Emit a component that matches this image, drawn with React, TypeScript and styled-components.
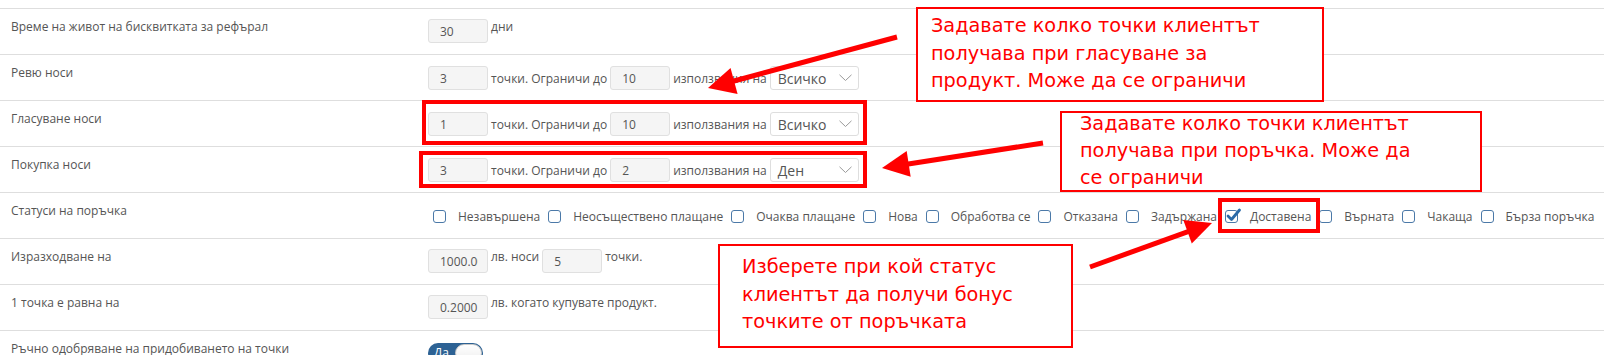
import React from "react";
import styled, { createGlobalStyle } from "styled-components";

const GlobalStyle = createGlobalStyle`
  html, body { margin: 0; padding: 0; background: #ffffff; }
  body { font-family: "Open Sans", "Liberation Sans", sans-serif; }
  * { box-sizing: border-box; }
`;

const Page = styled.div`
  position: relative;
  width: 1604px;
  height: 355px;
  overflow: hidden;
  padding-top: 8px;
  background: #fff;
`;

const Table = styled.div`
  border-top: 1px solid #dedede;
`;

const Row = styled.div`
  display: grid;
  grid-template-columns: 428px 1fr;
  height: 46px;
  border-bottom: 1px solid #dedede;
`;

const Label = styled.div`
  padding: 8px 0 0 11px;
  font-size: 12px;
  line-height: 20px;
  color: #555;
  white-space: nowrap;
`;

const Controls = styled.div<{ $top?: number }>`
  display: flex;
  align-items: center;
  align-self: start;
  gap: 3px;
  padding-top: ${(p) => p.$top ?? 10}px;
`;

const Field = styled.input`
  width: 60px;
  height: 24px;
  padding: 0 9px 0 11px;
  border: 1px solid #e0e0e0;
  border-radius: 3px;
  background: #f5f5f5;
  font-family: "Open Sans", sans-serif;
  font-size: 12px;
  color: #555;
  outline: none;
`;

const Note = styled.span<{ $raised?: boolean }>`
  font-size: 12px;
  color: #555;
  white-space: nowrap;
  line-height: ${(p) => (p.$raised ? "16px" : "24px")};
  align-self: ${(p) => (p.$raised ? "flex-start" : "center")};
  margin-top: ${(p) => (p.$raised ? "0px" : "2px")};
`;

const SelectBox = styled.div`
  width: 89px;
  height: 24px;
  border: 1px solid #dedede;
  border-radius: 3px;
  background: #fff;
  display: flex;
  align-items: center;
  justify-content: space-between;
  padding: 0 6px 0 7px;
  font-size: 14px;
  color: #555;
`;

const CheckList = styled.div`
  display: flex;
  align-items: center;
  padding: 13px 0 0 5px;
  height: 33px;
`;

const CheckItem = styled.label`
  display: flex;
  align-items: center;
  margin-right: 8px;
  font-size: 12px;
  color: #555;
  white-space: nowrap;
`;

const Box = styled.span`
  position: relative;
  width: 13px;
  height: 13px;
  border: 1.5px solid #4b79a8;
  border-radius: 3px;
  margin-right: 12px;
  background: #fff;
`;

const Tick = styled.svg`
  position: absolute;
  left: 0px;
  top: -4px;
`;

const Switch = styled.div`
  width: 55px;
  height: 20px;
  border-radius: 10px;
  background: #2d6294;
  display: flex;
  align-items: center;
  padding-left: 6px;
  font-size: 12px;
  line-height: 20px;
  color: #fff;
  gap: 6px;
`;

const Knob = styled.span`
  flex: 1;
  height: 18px;
  margin-right: 1px;
  border-radius: 9px;
  background: linear-gradient(#ffffff, #eeeeee);
  border: 1px solid #c8c8c8;
`;

const Callout = styled.div<{ $x: number; $y: number; $w: number; $h: number; $pl: number }>`
  position: absolute;
  left: ${(p) => p.$x}px;
  top: ${(p) => p.$y}px;
  width: ${(p) => p.$w}px;
  height: ${(p) => p.$h}px;
  padding-left: ${(p) => p.$pl}px;
  border: 2px solid #ff0000;
  background: #fff;
  font-family: "DejaVu Sans", Verdana, sans-serif;
  font-size: 19.3px;
  color: #ff0000;
  white-space: nowrap;
`;

const CalloutText = styled.div<{ $mt: number; $lh: number }>`
  margin-top: ${(p) => p.$mt}px;
  line-height: ${(p) => p.$lh}px;
`;

const Frame = styled.div<{ $x: number; $y: number; $w: number; $h: number }>`
  position: absolute;
  left: ${(p) => p.$x}px;
  top: ${(p) => p.$y}px;
  width: ${(p) => p.$w}px;
  height: ${(p) => p.$h}px;
  border: 4px solid #ff0000;
`;

const ArrowLayer = styled.svg`
  position: absolute;
  left: 0;
  top: 0;
  pointer-events: none;
`;

const Chevron = () => (
  <svg width="13" height="8" viewBox="0 0 13 8">
    <polyline points="0.5,0.8 6.5,6.5 12.5,0.8" fill="none" stroke="#9a9a9a" strokeWidth="1" />
  </svg>
);

const Select = ({ value }: { value: string }) => (
  <SelectBox>
    <span>{value}</span>
    <Chevron />
  </SelectBox>
);

const Check = ({ label, checked }: { label: string; checked?: boolean }) => (
  <CheckItem>
    <Box>
      {checked && (
        <Tick width="16" height="16" viewBox="0 0 16 16">
          <polyline points="2,9 5.5,12.5 13.5,3" fill="none" stroke="#2a6aa8" strokeWidth="2.8" strokeLinecap="round" strokeLinejoin="round" />
        </Tick>
      )}
    </Box>
    {label}
  </CheckItem>
);

const statuses: { label: string; checked?: boolean }[] = [
  { label: "Незавършена" },
  { label: "Неосъществено плащане" },
  { label: "Очаква плащане" },
  { label: "Нова" },
  { label: "Обработва се" },
  { label: "Отказана" },
  { label: "Задържана" },
  { label: "Доставена", checked: true },
  { label: "Върната" },
  { label: "Чакаща" },
  { label: "Бърза поръчка" },
];

const LimitRow = ({ pts, lim, period }: { pts: string; lim: string; period: string }) => (
  <Controls>
    <Field readOnly defaultValue={pts} />
    <Note>точки. Ограничи до</Note>
    <Field readOnly defaultValue={lim} />
    <Note>използвания на</Note>
    <Select value={period} />
  </Controls>
);

type Pt = [number, number];
const Arrow = ({ tail, tip, len, half }: { tail: Pt; tip: Pt; len: number; half: number }) => {
  const dx = tip[0] - tail[0];
  const dy = tip[1] - tail[1];
  const d = Math.hypot(dx, dy);
  const ux = dx / d;
  const uy = dy / d;
  const bx = tip[0] - ux * len;
  const by = tip[1] - uy * len;
  const px = -uy;
  const py = ux;
  const pts = `${tip[0]},${tip[1]} ${bx + px * half},${by + py * half} ${bx - px * half},${by - py * half}`;
  return (
    <g>
      <line x1={tail[0]} y1={tail[1]} x2={bx + ux * 2} y2={by + uy * 2} stroke="#ff0000" strokeWidth="5" />
      <polygon points={pts} fill="#ff0000" />
    </g>
  );
};

export default function App() {
  return (
    <>
      <GlobalStyle />
      <Page>
        <Table>
          <Row>
            <Label>Време на живот на бисквитката за рефърал</Label>
            <Controls>
              <Field readOnly defaultValue="30" />
              <Note $raised>дни</Note>
            </Controls>
          </Row>
          <Row>
            <Label>Ревю носи</Label>
            <LimitRow pts="3" lim="10" period="Всичко" />
          </Row>
          <Row>
            <Label>Гласуване носи</Label>
            <LimitRow pts="1" lim="10" period="Всичко" />
          </Row>
          <Row>
            <Label>Покупка носи</Label>
            <LimitRow pts="3" lim="2" period="Ден" />
          </Row>
          <Row>
            <Label>Статуси на поръчка</Label>
            <CheckList>
              {statuses.map((s) => (
                <Check key={s.label} label={s.label} checked={s.checked} />
              ))}
            </CheckList>
          </Row>
          <Row>
            <Label>Изразходване на</Label>
            <Controls>
              <Field readOnly defaultValue="1000.00" />
              <Note $raised>лв. носи</Note>
              <Field readOnly defaultValue="5" />
              <Note $raised>точки.</Note>
            </Controls>
          </Row>
          <Row>
            <Label>1 точка е равна на</Label>
            <Controls>
              <Field readOnly defaultValue="0.2000" />
              <Note $raised>лв. когато купувате продукт.</Note>
            </Controls>
          </Row>
          <Row>
            <Label>Ръчно одобряване на придобиването на точки</Label>
            <Controls $top={12}>
              <Switch>
                Да
                <Knob />
              </Switch>
            </Controls>
          </Row>
        </Table>

        <Frame $x={422} $y={100} $w={445} $h={45} />
        <Frame $x={419} $y={151} $w={448} $h={37} />
        <Frame $x={1218} $y={198} $w={102} $h={35} />

        <Callout $x={916} $y={7} $w={408} $h={95} $pl={13}>
          <CalloutText $mt={3} $lh={27.5}>
            Задавате колко точки клиентът
            <br />
            получава при гласуване за
            <br />
            продукт. Може да се ограничи
          </CalloutText>
        </Callout>
        <Callout $x={1060} $y={111} $w={422} $h={81} $pl={18}>
          <CalloutText $mt={-3.5} $lh={27}>
            Задавате колко точки клиентът
            <br />
            получава при поръчка. Може да
            <br />
            се ограничи
          </CalloutText>
        </Callout>
        <Callout $x={718} $y={244} $w={355} $h={104} $pl={22}>
          <CalloutText $mt={7} $lh={27.5}>
            Изберете при кой статус
            <br />
            клиентът да получи бонус
            <br />
            точките от поръчката
          </CalloutText>
        </Callout>

        <ArrowLayer width="1604" height="355" viewBox="0 0 1604 355">
          <Arrow tail={[897, 37]} tip={[708, 88]} len={27} half={13.5} />
          <Arrow tail={[1043, 143]} tip={[882, 168]} len={27} half={13} />
          <Arrow tail={[1090, 267]} tip={[1212, 223]} len={26} half={12.5} />
        </ArrowLayer>
      </Page>
    </>
  );
}
